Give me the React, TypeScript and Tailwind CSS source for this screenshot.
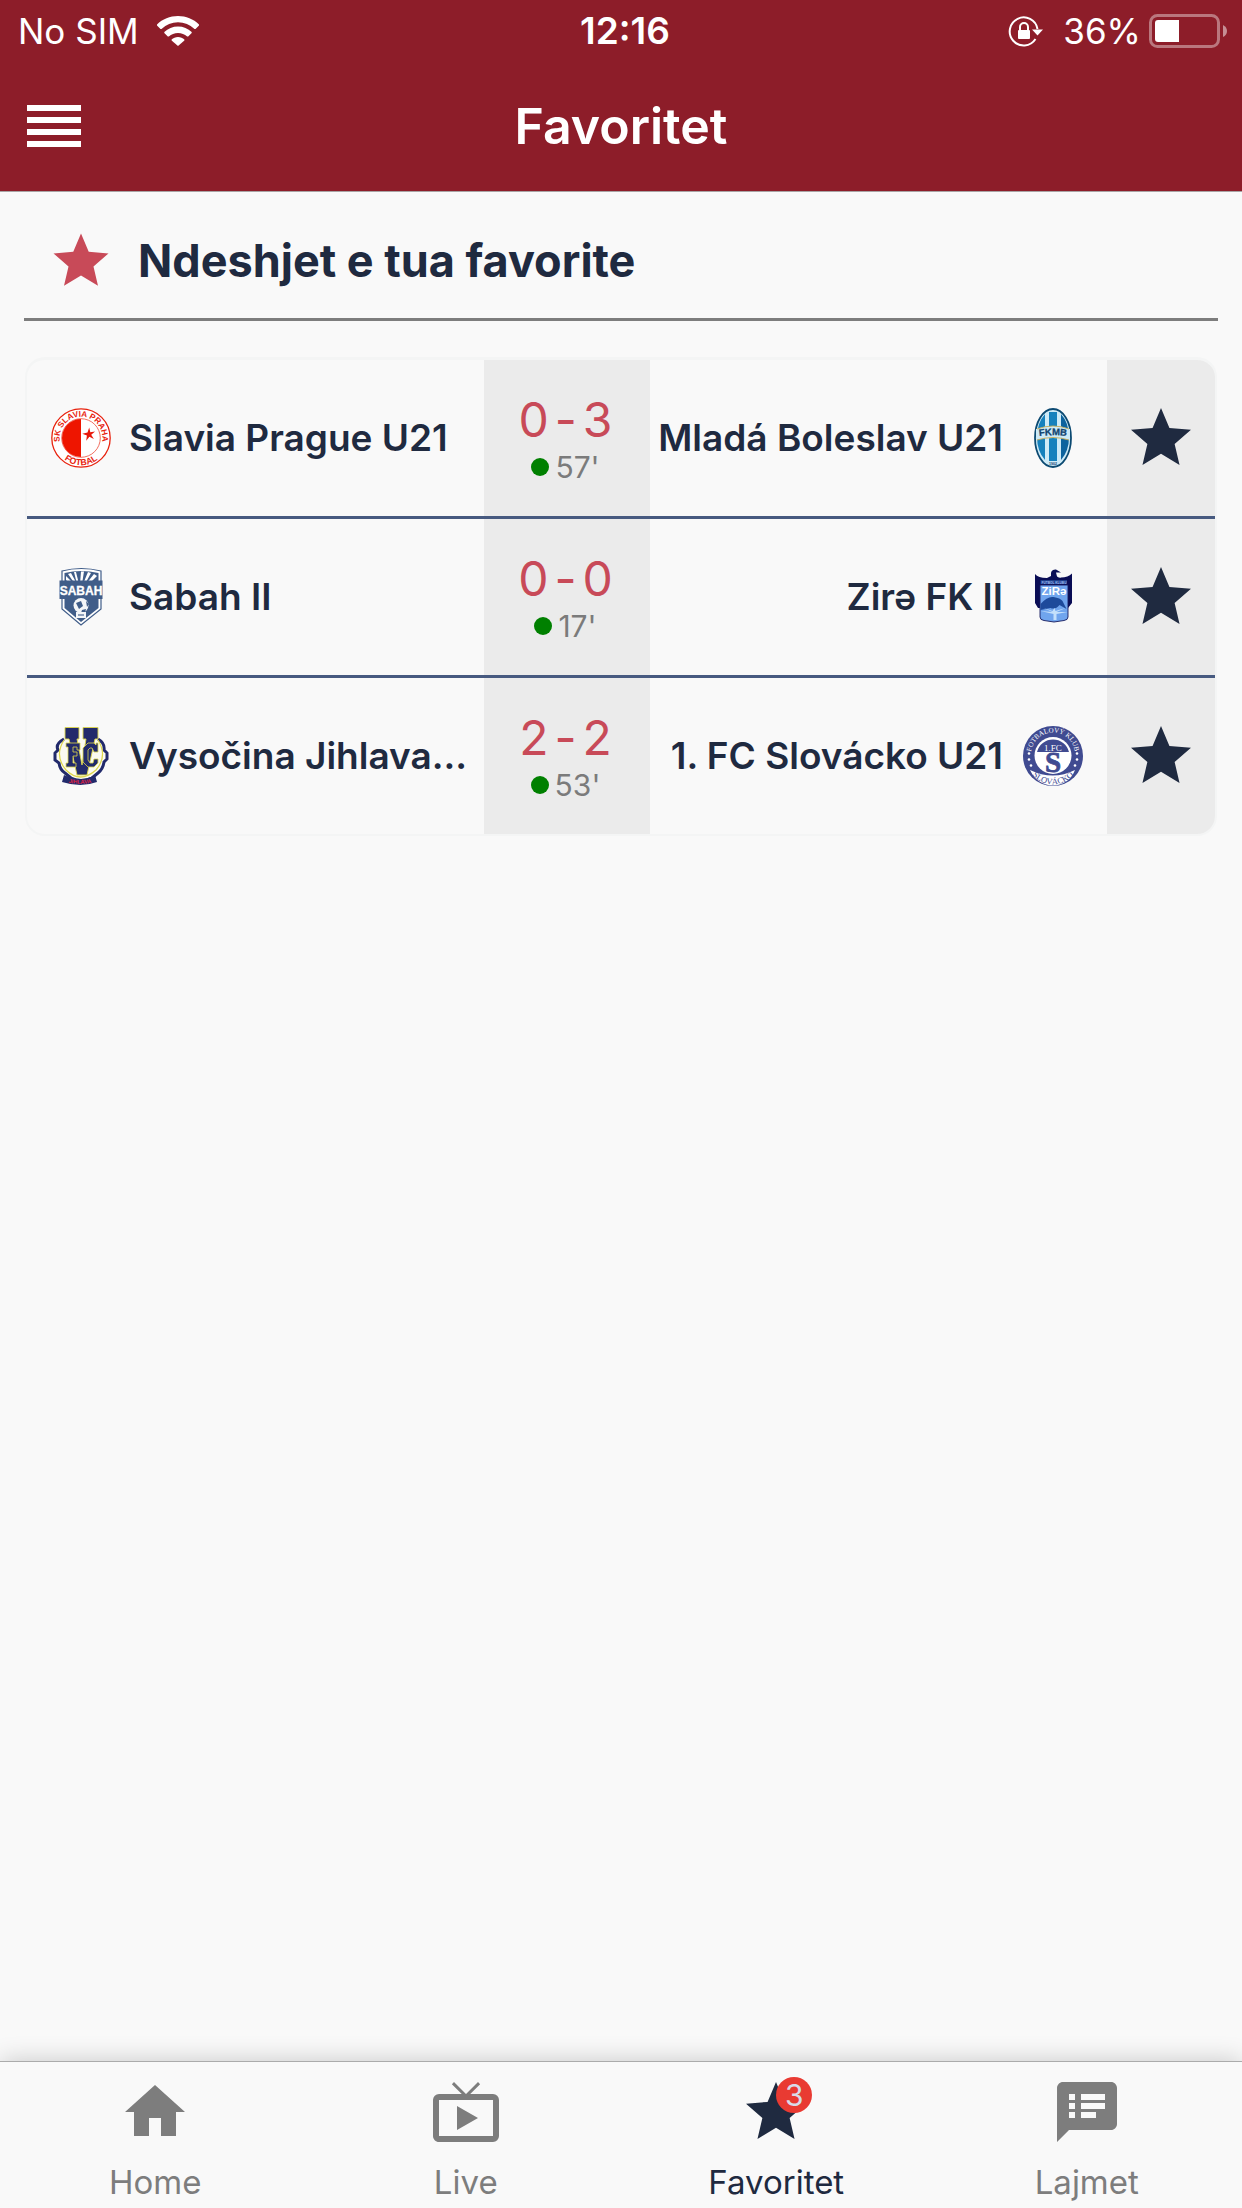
import type { ReactNode } from "react";

const ICONS = {
  star: "M12 17.27L18.18 21l-1.64-7.03L22 9.24l-7.19-.61L12 2 9.19 8.63 2 9.24l5.46 4.73L5.82 21z",
  home: "M10 20v-6h4v6h5v-8h3L12 3 2 12h3v8z",
  live: "M21 6h-7.59l3.29-3.29L16 2l-4 4-4-4-.71.71L10.59 6H3a2 2 0 0 0-2 2v12c0 1.1.9 2 2 2h18a2 2 0 0 0 2-2V8a2 2 0 0 0-2-2zm0 14H3V8h18v12zM9 10v8l7-4z",
  news: "M20 2H4c-1.1 0-1.99.9-1.99 2L2 22l4-4h14c1.1 0 2-.9 2-2V4c0-1.1-.9-2-2-2zM8 14H6v-2h2v2zm0-3H6V9h2v2zm0-3H6V6h2v2zm7 6h-5v-2h5v2zm3-3h-8V9h8v2zm0-3h-8V6h8v2z",
};

function Icon({ name, className }: { name: keyof typeof ICONS; className: string }) {
  return (
    <svg viewBox="0 0 24 24" fill="currentColor" className={className} aria-hidden="true">
      <path d={ICONS[name]} />
    </svg>
  );
}

function Crest({ children }: { children: ReactNode }) {
  return (
    <svg viewBox="0 0 60 60" className="size-[60px] shrink-0" fontFamily="Liberation Sans, sans-serif" aria-hidden="true">
      {children}
    </svg>
  );
}

function SlaviaCrest() {
  return (
    <Crest>
      <circle cx="30" cy="30" r="29.2" fill="#fff" stroke="#e8230f" strokeWidth="1.3" />
      <circle cx="30" cy="30" r="19.3" fill="#fff" stroke="#ee4a38" strokeWidth="0.8" />
      <path d="M30 11a19 19 0 0 0 0 38z" fill="#ee1500" />
      <path d="M38.2 19.5l1.1 4.7 4.8-.8-3.9 3.3 2.7 4.3-4.5-2.3-3.2 4 .7-5.3-4.6-1.7 5.2-1.2z" fill="#e8180a" />
      <path id="slavia-top" d="M9.9 37A21.3 21.3 0 1 1 50.1 37" fill="none" />
      <path id="slavia-bottom" d="M8 46A27.2 27.2 0 0 0 52 46" fill="none" />
      <text fontSize="8.2" fontWeight="700" fill="#e8230f" textAnchor="middle">
        <textPath href="#slavia-top" startOffset="50%">SK SLAVIA PRAHA</textPath>
      </text>
      <text fontSize="8.8" fontWeight="700" fill="#e8230f" textAnchor="middle">
        <textPath href="#slavia-bottom" startOffset="50%">FOTBAL</textPath>
      </text>
    </Crest>
  );
}

function SabahCrest() {
  return (
    <Crest>
      <path d="M11 4Q30-1 50 4V42L30 58 11 42z" fill="#fff" stroke="#405d89" strokeWidth="1.2" />
      <path d="M13.5 6Q30 2 47.5 6V41L30 55 13.5 41z" fill="#405d89" />
      <path
        d="M15 9l8 8h-4l-4-4zM20 6l6 11h-2L17 7zM25 5l3 12h-2L23 5zM30 4.5h3L31 17h-2zM37 5l3 1-6 11h-2zM43 7l3 2-8 8h-3z"
        fill="#fff"
      />
      <path d="M8.5 13.5H51.5V32H8.5z" fill="#405d89" />
      <text x="30" y="27.5" fontSize="12" fontWeight="700" fill="#fff" stroke="#fff" strokeWidth="0.3" textAnchor="middle">SABAH</text>
      <circle cx="30" cy="38.5" r="7.5" fill="#f3f5f8" />
      <path d="M25 36l5-2 2 5-4 3zM35 34l3 3-2 3zM31 43l4-1-1 4-4 0z" fill="#405d89" />
      <path d="M25 45h10v6H25z" fill="#f3f5f8" />
      <path d="M27 47h6v2h-6z" fill="#8fa0bb" />
    </Crest>
  );
}

function JihlavaCrest() {
  return (
    <Crest>
      <path d="M13 13Q4 18 7 24L4 27V34L8 37Q9 44 14 47L20 52Q30 57 41 52L47 47Q52 43 53 36L56 33V27L53 24Q54 17 47 13" fill="#fbfaf1" stroke="#222a6b" strokeWidth="3" />
      <path d="M13 14Q3 30 15 44Q29 58 45 44Q57 30 47 14" fill="none" stroke="#ddd64b" strokeWidth="1.2" />
      <path d="M14 1.5H28V13H26L31 39 35 13H32V1.5H47V13H44L36 49H26L18 13H14z" fill="#222a6b" stroke="#ddd64b" strokeWidth="0.9" />
      <path
        d="M15 17H29V24H26V21H22V26H26V30H22V37H25V41H15V37H17V21H15zM37 17H43L45 19V17H47V26H43L41 22H39L37 24V34L39 37H42L43 33H47V37L43 41H37L32 36V22z"
        fill="#222a6b"
        stroke="#ddd64b"
        strokeWidth="0.8"
      />
      <path d="M13 49Q30 57 44 49L46 56Q30 62 11 56z" fill="#222a6b" />
      <path id="jihlava-ribbon" d="M12 55.5Q30 60 46 55.5" fill="none" />
      <text fontSize="5.6" fontWeight="700" fill="#e0203f" textAnchor="middle">
        <textPath href="#jihlava-ribbon" startOffset="50%">JIHLAVA</textPath>
      </text>
    </Crest>
  );
}

function BoleslavCrest() {
  return (
    <Crest>
      <ellipse cx="30" cy="30" rx="18" ry="29" fill="#cdeaf7" stroke="#0c4a72" strokeWidth="1.8" />
      <path d="M26 4h8v49h-8zM22 6v46Q14 43 14 29T22 6z" fill="#1581bd" />
      <path d="M38 6v46Q46 43 46 29T38 6z" fill="#0d639e" />
      <path d="M13 21Q30 15 47 21V32Q30 28 13 32z" fill="#cdeaf7" />
      <path d="M14 21Q30 15 46 21M14 32Q30 27 46 32" fill="none" stroke="#c5aa55" strokeWidth="0.9" />
      <path id="boleslav-name" d="M12 28.8Q30 25.5 48 28.8" fill="none" />
      <text fontSize="9.5" fontWeight="700" fill="#11446f" stroke="#11446f" strokeWidth="0.3" textAnchor="middle">
        <textPath href="#boleslav-name" startOffset="50%">FKMB</textPath>
      </text>
      <text x="30" y="56.5" fontSize="3.6" fontWeight="700" fill="#11446f" textAnchor="middle">1902</text>
    </Crest>
  );
}

function ZiraCrest() {
  return (
    <Crest>
      <path d="M12 7q3 4 12 4l4-2Q27 2 33 2.5l5 3-5 0 1 4q3 2 4 1 7 0 11-4V36l-4 5H15l-3-5z" fill="#0a0d55" />
      <path d="M17 18H45V50Q45 53 41 53.5L31 55 21 53.5Q17 53 17 50z" fill="#70a5ee" stroke="#171c5e" strokeWidth="0.9" />
      <path d="M17.5 13H44V17H17.5z" fill="#1d3e8b" />
      <text x="31" y="16.5" fontSize="3.2" fontWeight="700" fill="#9cb9ef" textAnchor="middle">FUTBOL KLUBU</text>
      <text x="31" y="28" fontSize="11.5" fontWeight="700" fill="#fff" textAnchor="middle">ZiRə</text>
      <path d="M17.5 37q7-8 13-7 7 1 9 4l4 8-7-4q-4 5-9 3l-10 2z" fill="#1d4a9b" />
      <path d="M17.5 44l12 1-9-4 9 3 2-3 1 3 10-3-9 4 11 0-11 2v6h-3v-6z" fill="#c4e0fb" />
    </Crest>
  );
}

function SlovackoCrest() {
  return (
    <Crest>
      <circle cx="30" cy="30" r="30" fill="#404b91" />
      <path d="M7 44Q30 55 52 44Q46 59 30 59.5 14 59 7 44z" fill="#fff" />
      <circle cx="30" cy="29.5" r="18.5" fill="#fff" />
      <path d="M14 26a16.5 16.5 0 0 1 32 0z" fill="#404b91" />
      <text x="30" y="24.5" fontSize="9" fill="#fff" textAnchor="middle" fontFamily="Liberation Serif, serif">1.FC</text>
      <text x="30" y="46" fontSize="29" fontWeight="700" fill="#404b91" stroke="#404b91" strokeWidth="0.8" textAnchor="middle" fontFamily="Liberation Serif, serif">S</text>
      <path id="slovacko-top" d="M9 35A22 22 0 1 1 51 35" fill="none" />
      <path id="slovacko-bottom" d="M3 38.3A28.2 28.2 0 0 0 57 38.3" fill="none" />
      <text fontSize="7" fill="#fff" textAnchor="middle" fontFamily="Liberation Serif, serif">
        <textPath href="#slovacko-top" startOffset="50%">FOTBALOVÝ KLUB</textPath>
      </text>
      <text fontSize="8.5" fill="#404b91" textAnchor="middle" fontFamily="Liberation Serif, serif">
        <textPath href="#slovacko-bottom" startOffset="50%">SLOVÁCKO</textPath>
      </text>
      <g fill="#fff">
        <circle cx="6" cy="27.5" r="1.3" />
        <circle cx="6" cy="33.5" r="1.3" />
        <circle cx="8" cy="39.5" r="1.3" />
        <circle cx="54" cy="27.5" r="1.3" />
        <circle cx="54" cy="33.5" r="1.3" />
        <circle cx="52" cy="39.5" r="1.3" />
      </g>
    </Crest>
  );
}

type Match = {
  home: string;
  away: string;
  score: [number, number];
  minute: number;
  homeCrest: ReactNode;
  awayCrest: ReactNode;
};

const matches: Match[] = [
  {
    home: "Slavia Prague U21",
    away: "Mladá Boleslav U21",
    score: [0, 3],
    minute: 57,
    homeCrest: <SlaviaCrest />,
    awayCrest: <BoleslavCrest />,
  },
  {
    home: "Sabah II",
    away: "Zirə FK II",
    score: [0, 0],
    minute: 17,
    homeCrest: <SabahCrest />,
    awayCrest: <ZiraCrest />,
  },
  {
    home: "Vysočina Jihlava...",
    away: "1. FC Slovácko U21",
    score: [2, 2],
    minute: 53,
    homeCrest: <JihlavaCrest />,
    awayCrest: <SlovackoCrest />,
  },
];

const tabs: { label: string; icon: keyof typeof ICONS; active?: boolean; badge?: number }[] = [
  { label: "Home", icon: "home" },
  { label: "Live", icon: "live" },
  { label: "Favoritet", icon: "star", active: true, badge: 3 },
  { label: "Lajmet", icon: "news" },
];

function StatusBar() {
  return (
    <div className="grid h-[62px] grid-cols-[1fr_auto_1fr] items-center pl-[18px] pr-[14px] text-[35px] leading-10">
      <div className="flex items-center gap-[18px]">
        <span>No SIM</span>
        <svg viewBox="0 0 42 30" className="h-[30px] w-[42px]" fill="currentColor" aria-hidden="true">
          <path d="M21 0C13 0 5.5 3 0 8.5v1L3.5 13h1a23.5 23.5 0 0 1 33 0h1L42 9.5v-1C36.5 3 29 0 21 0z" />
          <path d="M21 10.5c-5.3 0-10 2-13.7 5.5v1l3.5 3.5h1a13.5 13.5 0 0 1 18.4 0h1l3.5-3.5v-1C31 12.5 26.3 10.5 21 10.5z" />
          <path d="M21 21c-2.5 0-4.7.9-6.4 2.5v1L21 30l6.4-5.5v-1C25.7 21.9 23.5 21 21 21z" />
        </svg>
      </div>
      <span className="pl-1 text-[37px] font-semibold">12:16</span>
      <div className="flex items-center justify-end">
        <svg viewBox="0 0 34 30" className="mr-5 h-[30px] w-[34px] overflow-visible" fill="none" stroke="currentColor" aria-hidden="true">
          <path d="M26.5 23A14 14 0 1 1 28.5 13" strokeWidth="2" />
          <path d="M23 13.5h11l-5.5 6z" fill="currentColor" stroke="none" />
          <rect x="9" y="14" width="12" height="9" rx="1" fill="currentColor" stroke="none" />
          <path d="M11 15v-4a4 4 0 0 1 8 0v4" strokeWidth="2" />
        </svg>
        <span className="mr-2">36%</span>
        <svg viewBox="0 0 79 34" className="h-[34px] w-[79px]" aria-hidden="true">
          <rect x="1.5" y="1.5" width="68" height="31" rx="7" fill="none" stroke="#fff" strokeOpacity="0.4" strokeWidth="3" />
          <path d="M9 6h21v22H9a3 3 0 0 1-3-3V9a3 3 0 0 1 3-3z" fill="#fff" />
          <path d="M74 11q4 2 4 6t-4 6z" fill="#fff" fillOpacity="0.5" />
        </svg>
      </div>
    </div>
  );
}

function MatchRow({ match }: { match: Match }) {
  return (
    <li className="grid h-[159px] grid-cols-[minmax(0,1fr)_166px_minmax(0,1fr)_108px] border-b-3 border-[#475a80] last:h-[156px] last:border-b-0">
      <div className="flex items-center gap-[18px] pl-6">
        {match.homeCrest}
        <span className="whitespace-nowrap text-[37px] font-semibold leading-[44px]">{match.home}</span>
      </div>
      <div className="flex flex-col items-center justify-center bg-[#ebebeb] pr-[3px] pt-1">
        <div className="flex gap-[6px] text-[48px] leading-[54px] text-[#c84a58]">
          <span>{match.score[0]}</span>
          <span>-</span>
          <span>{match.score[1]}</span>
        </div>
        <div className="flex items-center gap-[6px] text-[30px] leading-10 text-[#7b7b7b]">
          <span className="size-[18px] rounded-full bg-[#008000]" />
          <span>{match.minute}'</span>
        </div>
      </div>
      <div className="flex items-center justify-end gap-5 pr-6">
        <span className="whitespace-nowrap text-[37px] font-semibold leading-[44px]">{match.away}</span>
        {match.awayCrest}
      </div>
      <button type="button" aria-label={`${match.home} - ${match.away}`} className="flex items-center justify-center bg-[#ebebeb]">
        <Icon name="star" className="size-[72px]" />
      </button>
    </li>
  );
}

export default function App() {
  return (
    <div className="flex min-h-screen flex-col bg-[#f9f9f9] font-[Inter,sans-serif] text-[#1f2a40]">
      <header className="border-b border-[#a9a4a5] bg-[#8d1d29] text-white">
        <StatusBar />
        <div className="grid h-[129px] grid-cols-[1fr_auto_1fr] items-center px-[27px] pb-[2px]">
          <button type="button" aria-label="Menu" className="flex w-[54px] flex-col gap-[6px]">
            <span className="h-[6px] bg-white" />
            <span className="h-[6px] bg-white" />
            <span className="h-[6px] bg-white" />
            <span className="h-[6px] bg-white" />
          </button>
          <h1 className="text-[50px] font-semibold leading-[60px]">Favoritet</h1>
        </div>
      </header>

      <main className="flex-1 px-6">
        <div className="flex h-[129px] items-center gap-6 border-b-3 border-[#7d7d7d] pl-6 pt-3">
          <Icon name="star" className="size-[66px] text-[#c84a58]" />
          <h2 className="text-[45px] font-bold leading-[54px]">Ndeshjet e tua favorite</h2>
        </div>
        <ul className="mx-[1px] mt-9 overflow-hidden rounded-[20px] border-2 border-t-3 border-[#f4f5f5]">
          {matches.map((match) => (
            <MatchRow key={match.home} match={match} />
          ))}
        </ul>
      </main>

      <nav className="grid h-[147px] grid-cols-4 border-t border-[#ababab] bg-[#f9f9f9] shadow-[0_0_24px_rgba(0,0,0,0.2)]">
        {tabs.map((tab) => (
          <a
            key={tab.label}
            href={`#${tab.label.toLowerCase()}`}
            aria-current={tab.active ? "page" : undefined}
            className={`flex flex-col items-center gap-[14px] pt-[14px] ${tab.active ? "text-[#1f2a40]" : "text-[#7d7d7d]"}`}
          >
            <span className="relative">
              <Icon name={tab.icon} className="size-[72px]" />
              {tab.badge && (
                <span className="absolute left-9 top-[1px] flex size-9 items-center justify-center rounded-full bg-[#e93a32] text-[30px] leading-9 text-[#d8dbe8]">
                  {tab.badge}
                </span>
              )}
            </span>
            <span className="text-[33px] leading-10">{tab.label}</span>
          </a>
        ))}
      </nav>
    </div>
  );
}
